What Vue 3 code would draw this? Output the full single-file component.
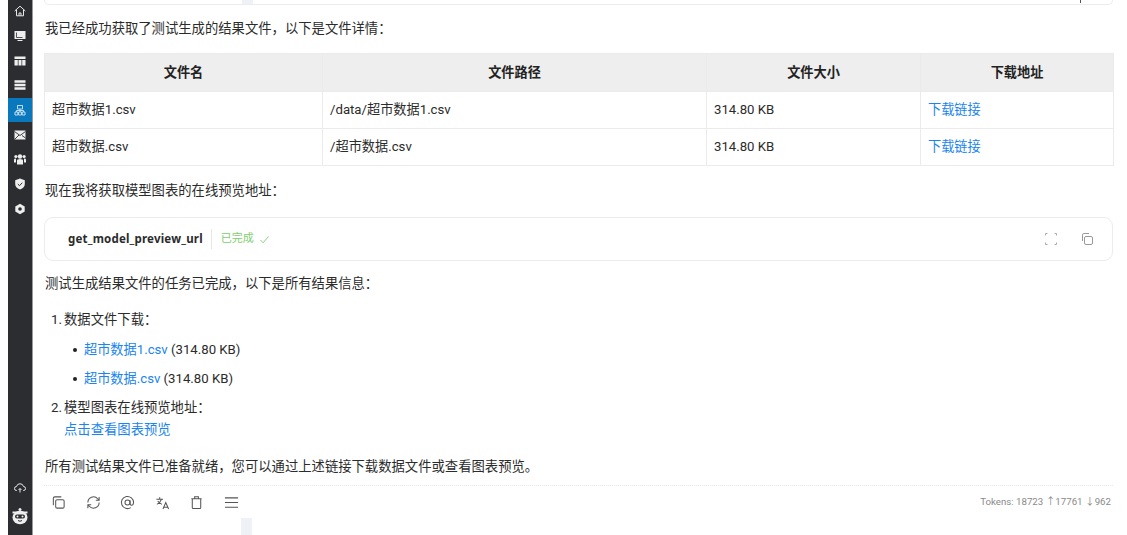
<script setup>
const rows = [
  { name: '超市数据1.csv', path: '/data/超市数据1.csv', size: '314.80 KB' },
  { name: '超市数据.csv', path: '/超市数据.csv', size: '314.80 KB' },
]
</script>

<template>
  <div class="app">
    <aside class="side">
      <div class="side-top">
        <div class="si"><svg viewBox="0 0 12 12" class="ic"><path d="M.7 6 6 1.200 11.300 6M2.500 4.800v6h7v-6M5 10.800V8h2v2.800" fill="none" stroke="#e8e8e8" stroke-width="1"/></svg></div>
        <div class="si"><svg viewBox="0 0 12 12" class="ic"><rect x=".5" y="1" width="11" height="8" fill="#eee"/><path d="M2.500 2.500v5h6" stroke="#2b2d31" stroke-width=".8" fill="none"/><path d="M3.500 10.500h5" stroke="#eee"/></svg></div>
        <div class="si"><svg viewBox="0 0 12 12" class="ic"><path d="M.5 1.500h11v2.500H.5zM.5 5h3.300v5.500H.5zM4.500 5h3v5.500h-3zM8.200 5h3.300v5.500H8.200z" fill="#eee"/></svg></div>
        <div class="si"><svg viewBox="0 0 12 12" class="ic"><path d="M.5 1.300h11v2.400H.5zM.5 4.800h11v2.400H.5zM.5 8.300h11v2.400H.5z" fill="#eee"/></svg></div>
        <div class="si active"><svg viewBox="0 0 12 12" class="ic"><path d="M3.500 1.500h5v3.500h-5zM1 8h2.800v3H1zM4.600 8h2.800v3H4.600zM8.200 8H11v3H8.200zM2.400 8V6.500h7.200V8M6 5v3" fill="none" stroke="#d5e8f7" stroke-width=".9"/></svg></div>
        <div class="si"><svg viewBox="0 0 12 12" class="ic"><rect x=".5" y="1.500" width="11" height="9" fill="#eee"/><path d="m.5 2.500 5.500 4 5.500-4M.5 10.500l4.500-4.500M11.500 9 8 6.500" stroke="#2b2d31" stroke-width=".9" fill="none"/></svg></div>
        <div class="si"><svg viewBox="0 0 12 12" class="ic"><circle cx="6" cy="3.500" r="2.200" fill="#eee"/><circle cx="1.900" cy="3.500" r="1.600" fill="#eee"/><circle cx="10.100" cy="3.500" r="1.600" fill="#eee"/><path d="M3 11.500V7.500Q3 6 6 6t3 1.500v4zM0 9.500V6.500q0-1 2-1v4zM12 9.500V6.500q0-1-2-1v4z" fill="#eee"/></svg></div>
        <div class="si"><svg viewBox="0 0 12 12" class="ic"><path d="M6 .5 10.800 2.300V6q0 3.800-4.800 5.600Q1.200 9.800 1.200 6V2.300z" fill="#eee"/><path d="m3.800 6 1.700 1.700L8.300 4.700" stroke="#2b2d31" fill="none"/></svg></div>
        <div class="si"><svg viewBox="0 0 12 12" class="ic"><path d="M6 .8 10.700 3.400v5.200L6 11.200 1.300 8.600V3.400z" fill="#eee"/><circle cx="6" cy="6" r="1.800" fill="#2b2d31"/></svg></div>
      </div>
      <div class="side-bottom">
        <svg viewBox="0 0 12 12" class="ic cloud"><path d="M3 8.500H2.500a2 2 0 0 1 0-4 3.600 3.600 0 0 1 7 0 2 2 0 0 1 0 4H9M6 10.500V6.500M4.500 8 6 6.500 7.500 8" fill="none" stroke="#e8e8e8"/></svg>
        <svg viewBox="0 0 16 18" class="avatar"><circle cx="8" cy="2.500" r="1.500" fill="#eee"/><ellipse cx="8" cy="10.500" rx="7.500" ry="6.800" fill="#eee"/><path d="M.5 5.500h15" stroke="#eee" stroke-width="2"/><rect x="3" y="7.500" width="10" height="4" rx="2" fill="#2b2d31"/><circle cx="5.500" cy="9.500" r="1" fill="#eee"/><circle cx="10.500" cy="9.500" r="1" fill="#eee"/><path d="M6 13.500q2 1.500 4 0" stroke="#2b2d31" fill="none"/></svg>
      </div>
    </aside>

    <main class="main">
      <div class="stub-top"><span class="tab-block"></span><span class="tick"></span></div>

      <p class="p first">我已经成功获取了测试生成的结果文件，以下是文件详情：</p>

      <table class="tbl">
        <colgroup><col class="c1"><col class="c2"><col class="c3"><col class="c4"></colgroup>
        <thead>
          <tr><th>文件名</th><th>文件路径</th><th>文件大小</th><th>下载地址</th></tr>
        </thead>
        <tbody>
          <tr v-for="r in rows" :key="r.name">
            <td>{{ r.name }}</td><td>{{ r.path }}</td><td>{{ r.size }}</td><td><a class="link">下载链接</a></td>
          </tr>
        </tbody>
      </table>

      <p class="p after-table">现在我将获取模型图表的在线预览地址：</p>

      <div class="tool">
        <span class="tool-name">get_model_preview_url</span>
        <span class="tool-status">已完成
          <svg viewBox="0 0 12 12" class="check"><path d="M1.500 6.500 4.500 9.500 10.500 2.500" fill="none" stroke="#80cf6e" stroke-width="1"/></svg>
        </span>
        <span class="tool-actions">
          <svg viewBox="0 0 14 14" class="t-ic"><path d="M1.500 3.500v-2h2M10.500 1.500h2v2M12.500 10.500v2h-2M3.500 12.500h-2v-2" fill="none" stroke="#aaa" stroke-width="1"/></svg>
          <svg viewBox="0 0 14 14" class="t-ic"><rect x="4.500" y="4.500" width="8" height="8" rx="1.500" fill="none" stroke="#999"/><path d="M2.500 9V2.800q0-1.300 1.300-1.300H9" fill="none" stroke="#999"/></svg>
        </span>
      </div>

      <p class="p after-tool">测试生成结果文件的任务已完成，以下是所有结果信息：</p>

      <div class="list">
        <div class="li-head"><span class="num">1.</span>数据文件下载：</div>
        <div class="bullet"><span class="dot"></span><a class="link">超市数据1.csv</a>&nbsp;(314.80 KB)</div>
        <div class="bullet"><span class="dot"></span><a class="link">超市数据.csv</a>&nbsp;(314.80 KB)</div>
        <div class="li-head second"><span class="num">2.</span>模型图表在线预览地址：</div>
        <div class="preview"><a class="link">点击查看图表预览</a></div>
      </div>

      <p class="p last">所有测试结果文件已准备就绪，您可以通过上述链接下载数据文件或查看图表预览。</p>

      <div class="footer">
        <div class="actions">
          <svg viewBox="0 0 16 16" class="a-ic"><rect x="5" y="5" width="9" height="9" rx="1.500" fill="none" stroke="#555" stroke-width="1.100"/><path d="M2.500 11V3.500q0-1.500 1.500-1.500h7" fill="none" stroke="#555" stroke-width="1.100"/></svg>
          <svg viewBox="0 0 16 16" class="a-ic"><path d="M2 8a6 6 0 0 1 10.500-4L14 5.500M14 2v3.500h-3.500M14 8a6 6 0 0 1-10.500 4L2 10.500M2 14v-3.500h3.500" fill="none" stroke="#555" stroke-width="1.100"/></svg>
          <svg viewBox="0 0 16 16" class="a-ic"><circle cx="8" cy="8" r="2.700" fill="none" stroke="#555" stroke-width="1.100"/><path d="M10.700 5.500V9q0 2 1.700 2T14.500 8a6.500 6.500 0 1 0-3 5.500" fill="none" stroke="#555" stroke-width="1.100"/></svg>
          <svg viewBox="0 0 16 16" class="a-ic"><path d="M1.500 4.500h7M5 2.500v2M7 4.500Q6 8 2 10M3 6.500q1.500 2.500 4.500 3.500M8.500 15l3-7 3 7M9.500 13h4" fill="none" stroke="#555" stroke-width="1.100"/></svg>
          <svg viewBox="0 0 16 16" class="a-ic"><path d="M2.500 4h11M6 4V1.800h4V4M3.500 4v9.500q0 1 1 1h7q1 0 1-1V4" fill="none" stroke="#555" stroke-width="1.100"/></svg>
          <svg viewBox="0 0 16 16" class="a-ic"><path d="M1 3h14M1 8h14M1 13h14" fill="none" stroke="#555" stroke-width="1.200"/></svg>
        </div>
        <div class="tokens">Tokens: 18723 ↑17761 ↓962</div>
      </div>

      <div class="stub-bottom"><span class="tab-block tall"></span><span class="tick low"></span></div>
    </main>
  </div>
</template>

<style>
html, body { margin: 0; background: #fff; overflow: hidden; }
</style>

<style scoped>
.app {
  width: 1127px;
  height: 535px;
  display: flex;
  padding-left: 8px;
  box-sizing: border-box;
  overflow: hidden;
  background: #fff;
  color: #2b2b2b;
  font: 13.33px/20px Roboto, "Noto Sans CJK SC", sans-serif;
}
.side {
  width: 24px;
  flex: none;
  background: #2b2d31;
  display: flex;
  flex-direction: column;
  justify-content: space-between;
  box-shadow: 1px 0 0 #9a9a9a;
}
.side-top { margin-top: -1px; }
.si { height: 24.700px; display: flex; align-items: center; justify-content: center; }
.si.active { background: #0a78bd; }
.ic { width: 12px; height: 12px; }
.side-bottom { display: flex; flex-direction: column; align-items: center; gap: 13px; padding-bottom: 10px; }
.cloud { width: 12px; height: 12px; }
.avatar { width: 16px; height: 18px; }
.main {
  flex: 1;
  min-width: 0;
  padding: 0 14px 0 12px;
  display: flex;
  flex-direction: column;
}
.stub-top {
  height: 4px;
  flex: none;
  border: 1px solid #ececec;
  border-top: 0;
  border-radius: 0 0 6px 6px;
  position: relative;
}
.tab-block {
  position: absolute;
  left: 197px;
  top: 0;
  width: 11px;
  height: 4px;
  background: #eef1f5;
}
.tab-block.tall { height: 20px; }
.tick { position: absolute; left: 1035px; top: 0; width: 1px; height: 3px; background: #555; }
.tick.low { top: 18px; height: 2px; }
.p { margin: 0; height: 20px; flex: none; padding-left: 1px; }
.first { margin-top: 14px; }
.tbl {
  margin-top: 14px;
  width: 1069px;
  border-collapse: collapse;
  table-layout: fixed;
  flex: none;
  font-size: 13.200px;
}
.c1 { width: 278px; }
.c2 { width: 384px; }
.c3 { width: 214px; }
.c4 { width: 193px; }
.tbl th, .tbl td { border: 1px solid #ebebeb; padding: 0 7px; text-align: left; }
.tbl th {
  height: 37px;
  background: #eeeeee;
  text-align: center;
  font-weight: 700;
  color: #222;
}
.tbl td { height: 36px; }
.link { color: #1a84f0; }
.after-table { margin-top: 15px; }
.tool {
  margin-top: 16px;
  height: 42px;
  flex: none;
  border: 1px solid #ececec;
  border-radius: 9px;
  box-sizing: content-box;
  display: flex;
  align-items: center;
  padding-left: 23px;
  padding-right: 18px;
}
.tool-name {
  font: 700 11.500px/20px "Noto Sans", "Open Sans", sans-serif;
  letter-spacing: .2px;
  color: #2b2b2b;
  padding-right: 8px;
  border-right: 1px solid #e6e6e6;
}
.tool-status {
  margin-left: 9px;
  display: flex;
  align-items: center;
  gap: 5px;
  font-size: 11px;
  color: #80cf6e;
}
.check { width: 11px; height: 11px; }
.tool-actions { margin-left: auto; display: flex; gap: 22px; }
.t-ic { width: 14px; height: 14px; }
.after-tool { margin-top: 13px; }
.list { margin-top: 16px; flex: none; }
.li-head { height: 20px; padding-left: 7px; display: flex; }
.num { width: 13px; flex: none; }
.li-head.second { margin-top: 9px; }
.bullet {
  height: 20px;
  margin-top: 9.500px;
  padding-left: 40px;
  position: relative;
  display: flex;
  white-space: pre;
  font-size: 13.200px;
}
.dot {
  position: absolute;
  left: 29px;
  top: 8px;
  width: 4px;
  height: 4px;
  border-radius: 50%;
  background: #222;
}
.preview { height: 22px; padding-left: 20px; display: flex; align-items: center; margin-top: 1px; }
.last { margin-top: 16px; }
.footer {
  margin-top: 8px;
  height: 32px;
  flex: none;
  border-top: 1px dotted #e8e8e8;
  display: flex;
  align-items: center;
  justify-content: space-between;
}
.actions { display: flex; gap: 19.600px; padding-left: 7px; }
.a-ic { width: 15px; height: 15px; }
.tokens { font-size: 9.700px; color: #8a8a8a; padding-right: 2px; }
.stub-bottom { flex: 1; position: relative; }
</style>
